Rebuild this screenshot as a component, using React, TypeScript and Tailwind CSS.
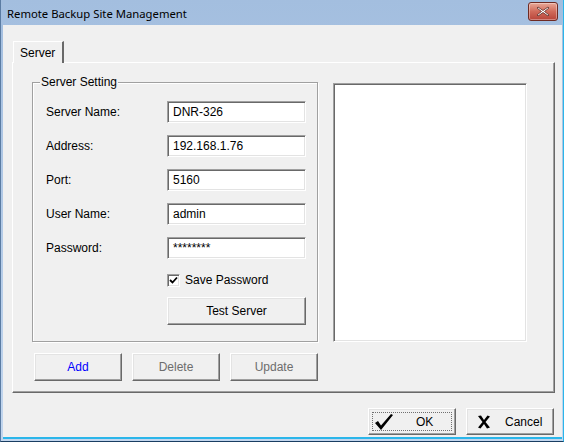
import React from 'react';

const font = { fontFamily: '"Liberation Sans", Arial, sans-serif' };

function Raised({
  className = '',
  children,
}: {
  className?: string;
  children?: React.ReactNode;
}) {
  return (
    <div
      className={`flex items-center justify-center bg-[#f0f0f0] border border-t-white border-l-white border-r-[#696969] border-b-[#696969] shadow-[inset_-1px_-1px_0_#a0a0a0,inset_1px_1px_0_#e3e3e3] text-[12px] ${className}`}
    >
      {children}
    </div>
  );
}

function Field({ label, value }: { label: string; value: string }) {
  return (
    <div className="flex items-center h-[22px]">
      <span className="w-[121px] text-[12px] text-black">{label}</span>
      <div className="w-[139px] h-[22px] bg-white border border-t-[#a0a0a0] border-l-[#a0a0a0] border-r-white border-b-white shadow-[inset_1px_1px_0_#696969,inset_-1px_-1px_0_#e3e3e3] flex items-center pl-[5px] text-[12px] text-black">
        {value}
      </div>
    </div>
  );
}

export default function App() {
  return (
    <div
      className="w-[564px] h-[442px] flex flex-col bg-gradient-to-b from-[#a3bedf] to-[#c2d6ee] border-l border-l-[#5b7ca3] border-r border-r-[#2bb6ea] border-b border-b-[#1a3e62]"
      style={font}
    >
      {/* Title bar */}
      <div className="h-[25px] flex items-center justify-between pl-[6px] pr-[5px] shrink-0">
        <span
          className="text-[11.3px] text-black pt-[3px]"
          style={{ fontFamily: '"Noto Sans", "Liberation Sans", sans-serif' }}
        >
          Remote Backup Site Management
        </span>
        <div className="w-[30px] h-[19px] -mt-[3px] rounded-[3px] border border-[#6e2a22] bg-gradient-to-b from-[#e8a898] via-[#d06a5a] to-[#b8443a] flex items-center justify-center shadow-[inset_0_0_0_1px_rgba(255,255,255,0.35)]">
          <svg width="14" height="11" viewBox="0 0 14 11">
            <path
              d="M2 1 L7 4.5 L12 1 L13 2 L8.5 5.5 L13 9 L12 10 L7 6.5 L2 10 L1 9 L5.5 5.5 L1 2 Z"
              fill="#ffffff"
              stroke="#5a2a24"
              strokeWidth="0.8"
            />
          </svg>
        </div>
      </div>

      {/* Client area */}
      <div className="flex-1 ml-[2px] mr-[1px] mb-[2px] bg-[#f0f0f0] border-b-2 border-b-[#2bb6ea] flex flex-col pl-[9px] pr-[8px] pt-[16px]">
        {/* Tab header */}
        <div className="flex h-[21px] relative z-10">
          <div className="ml-[1px] w-[51px] h-[22px] bg-[#f0f0f0] border-t border-l border-t-white border-l-white border-r-2 border-r-[#696969] flex items-center pl-[6px] text-[12px] text-black">
            Server
          </div>
        </div>

        {/* Tab panel */}
        <div className="w-[543px] h-[331px] border border-t-white border-l-white border-r-[#696969] border-b-[#696969] shadow-[inset_-1px_-1px_0_#a0a0a0] pl-[19px] pt-[19px] flex flex-col">
          <div className="flex gap-[15px]">
            {/* Group box */}
            <div className="relative w-[286px] h-[260px] border border-[#a0a0a0] shadow-[inset_1px_1px_0_white,1px_1px_0_white] pl-[13px] pt-[18px]">
              <span className="absolute left-[7px] -top-[8px] bg-[#f0f0f0] px-[1px] text-[12px] leading-[14px] text-black">
                Server Setting
              </span>
              <div className="flex flex-col gap-[12px]">
                <Field label="Server Name:" value="DNR-326" />
                <Field label="Address:" value="192.168.1.76" />
                <Field label="Port:" value="5160" />
                <Field label="User Name:" value="admin" />
                <Field label="Password:" value="********" />
              </div>
              <div className="ml-[121px] mt-[15px] flex items-center h-[12px]">
                <div className="w-[13px] h-[13px] bg-white border border-t-[#a0a0a0] border-l-[#a0a0a0] border-r-white border-b-white shadow-[inset_1px_1px_0_#696969,inset_-1px_-1px_0_#e3e3e3] flex items-center justify-center">
                  <svg width="9" height="9" viewBox="0 0 9 9">
                    <path d="M1 4 L3.5 6.5 L8 1.5" fill="none" stroke="#000" strokeWidth="1.8" />
                  </svg>
                </div>
                <span className="ml-[5px] text-[12px] text-black">Save Password</span>
              </div>
              <Raised className="ml-[121px] mt-[11px] w-[139px] h-[28px] text-black">Test Server</Raised>
            </div>

            {/* List box */}
            <div className="w-[194px] h-[259px] mt-[1px] bg-white border border-t-[#a0a0a0] border-l-[#a0a0a0] border-r-white border-b-white shadow-[inset_1px_1px_0_#696969,inset_-1px_-1px_0_#e3e3e3]" />
          </div>

          <div className="flex gap-[10px] mt-[11px] ml-[2px]">
            <Raised className="w-[88px] h-[28px] text-[#0000ff]">Add</Raised>
            <Raised className="w-[88px] h-[28px] text-[#6d6d6d]">Delete</Raised>
            <Raised className="w-[88px] h-[28px] text-[#6d6d6d]">Update</Raised>
          </div>
        </div>

        {/* Dialog buttons */}
        <div className="flex justify-end gap-[10px] mt-[15px]">
          <Raised className="w-[88px] h-[27px] relative text-black">
            <div className="absolute inset-[3px] border border-dotted border-[#707070]" />
            <div className="flex items-center w-full pl-[5px]">
              <svg width="20" height="18" viewBox="0 0 20 18">
                <path d="M1 10 L4 8 L7 12.5 L17 1 L19 2 L7 17 Z" fill="#000" />
              </svg>
              <span className="ml-[22px]">OK</span>
            </div>
          </Raised>
          <Raised className="w-[88px] h-[27px] text-black">
            <div className="flex items-center w-full pl-[10px]">
              <svg width="14" height="14" viewBox="0 0 14 14">
                <path
                  d="M1 1 L4 0.5 L7 5 L10.5 0.5 L13 1.5 L8.5 7 L13 12.5 L10 13.5 L7 9 L3.5 13.5 L1 12.5 L5.5 7 Z"
                  fill="#000"
                />
              </svg>
              <span className="ml-[14px]">Cancel</span>
            </div>
          </Raised>
        </div>
      </div>
    </div>
  );
}
